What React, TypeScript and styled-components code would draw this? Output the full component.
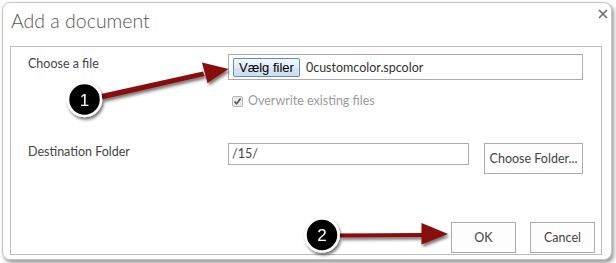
import React from "react";
import styled, { createGlobalStyle } from "styled-components";

const Global = createGlobalStyle`
  html, body { margin: 0; padding: 0; background: #ffffff; }
  body { font-family: Lato, "Open Sans", sans-serif; }
`;

const Stage = styled.div`
  position: relative;
  width: 616px;
  height: 263px;
  padding: 2px 0 0 2px;
  box-sizing: border-box;
`;

const Dialog = styled.div`
  width: 610px;
  height: 258px;
  box-sizing: border-box;
  border: 1px solid #c4c4c4;
  border-radius: 8px;
  background: #ffffff;
  box-shadow: 2px 3px 4px rgba(0, 0, 0, 0.4);
  display: flex;
  flex-direction: column;
`;

const Header = styled.div`
  height: 43px;
  box-sizing: border-box;
  padding: 4px 3px 0 8px;
  display: flex;
  align-items: flex-start;
  justify-content: space-between;
`;

const Title = styled.h1`
  margin: 0;
  font-family: Lato, "Open Sans", sans-serif;
  font-weight: 300;
  font-size: 19.5px;
  line-height: 28px;
  color: #555555;
`;

const Close = styled.svg`
  margin-top: 2px;
  width: 10px;
  height: 10px;
`;

const Panel = styled.div`
  margin: 0 9px 0 7px;
  height: 209px;
  box-sizing: border-box;
  border: 1px solid #bdbdbd;
  padding: 7px 6px 0 17px;
  display: flex;
  flex-direction: column;
`;

const Row = styled.div<{ $top?: number }>`
  display: grid;
  grid-template-columns: 200px 1fr;
  margin-top: ${(p) => p.$top ?? 0}px;
  align-items: start;
`;

const Label = styled.div<{ $pad?: number }>`
  font-size: 12.5px;
  color: #444444;
  padding-top: ${(p) => p.$pad ?? 0}px;
  line-height: 16px;
`;

const FieldColumn = styled.div`
  display: flex;
  flex-direction: column;
  gap: 14px;
`;

const Field = styled.div`
  display: flex;
  align-items: flex-start;
  gap: 15px;
`;

const FileBox = styled.div`
  width: 355px;
  height: 26px;
  box-sizing: border-box;
  border: 1px solid #ababab;
  display: flex;
  align-items: center;
  padding-left: 4px;
  gap: 6px;
`;

const NativeButton = styled.div`
  height: 19px;
  box-sizing: border-box;
  padding: 0 5px;
  border: 1px solid #5a8fc4;
  border-radius: 2px;
  background: linear-gradient(#f2f7fb, #e3edf6 50%, #d4e3f1 51%, #cfdfee);
  font-family: "Liberation Sans", Arial, sans-serif;
  font-size: 13px;
  line-height: 17px;
  color: #000000;
`;

const FileName = styled.span`
  font-size: 12.5px;
  color: #333333;
`;

const CheckRow = styled.label`
  display: flex;
  align-items: center;
  gap: 5px;
  font-size: 12.5px;
  line-height: 14px;
  color: #9a9a9a;
  margin-left: 4px;
`;

const Check = styled.span`
  width: 11px;
  height: 11px;
  box-sizing: border-box;
  border: 1px solid #b5b5b5;
  border-radius: 2px;
  background: #eaeaea;
  display: flex;
  align-items: center;
  justify-content: center;
`;

const TextBox = styled.div`
  width: 241px;
  height: 22px;
  box-sizing: border-box;
  border: 1px solid #ababab;
  font-size: 12.5px;
  line-height: 20px;
  color: #444444;
  padding-left: 3px;
`;

const Button = styled.div<{ $w: number }>`
  width: ${(p) => p.$w}px;
  height: 31px;
  box-sizing: border-box;
  border: 1px solid #ababab;
  background: #fdfdfd;
  font-size: 12.5px;
  color: #444444;
  display: flex;
  align-items: center;
  justify-content: center;
`;

const Footer = styled.div`
  margin-top: auto;
  margin-bottom: 1px;
  display: flex;
  justify-content: flex-end;
  gap: 14px;
`;

const Overlay = styled.svg`
  position: absolute;
  left: 0;
  top: 0;
  pointer-events: none;
`;

const MarkerText = styled.text`
  font-family: "Liberation Sans", Arial, sans-serif;
  font-size: 17px;
  fill: #ffffff;
`;

function Marker({ cx, cy, n }: { cx: number; cy: number; n: string }) {
  return (
    <g filter="url(#shadow)">
      <circle cx={cx} cy={cy} r={16.5} fill="#050505" stroke="#ffffff" strokeWidth={2.5} />
      <MarkerText x={cx} y={cy + 6} textAnchor="middle">
        {n}
      </MarkerText>
    </g>
  );
}

export default function App() {
  return (
    <>
      <Global />
      <Stage>
        <Dialog>
          <Header>
            <Title>Add a document</Title>
            <Close viewBox="0 0 10 10">
              <path d="M1 1 L9 9 M9 1 L1 9" stroke="#6a6a6a" strokeWidth="1.6" />
            </Close>
          </Header>
          <Panel>
            <Row $top={0}>
              <Label $pad={2}>Choose a file</Label>
              <FieldColumn>
                <FileBox>
                  <NativeButton>Vælg filer</NativeButton>
                  <FileName>0customcolor.spcolor</FileName>
                </FileBox>
                <CheckRow>
                  <Check>
                    <svg width="9" height="9" viewBox="0 0 9 9">
                      <path d="M1.5 4.5 L3.6 6.8 L7.6 1.6" stroke="#555" strokeWidth="1.7" fill="none" />
                    </svg>
                  </Check>
                  Overwrite existing files
                </CheckRow>
              </FieldColumn>
            </Row>
            <Row $top={35}>
              <Label $pad={1}>Destination Folder</Label>
              <Field>
                <TextBox>/15/</TextBox>
                <Button $w={99}>Choose Folder...</Button>
              </Field>
            </Row>
            <Footer>
              <Button $w={65}>OK</Button>
              <Button $w={65}>Cancel</Button>
            </Footer>
          </Panel>
        </Dialog>
        <Overlay width="616" height="263" viewBox="0 0 616 263">
          <defs>
            <filter id="shadow" x="-30%" y="-30%" width="170%" height="170%">
              <feDropShadow dx="1.5" dy="2.5" stdDeviation="1.6" floodColor="#000" floodOpacity="0.55" />
            </filter>
          </defs>
          <g filter="url(#shadow)" fill="#8a0b0b" stroke="none">
            <polygon points="101,94 203,71.5 204.5,76 102,99.5" />
            <polygon points="228.5,69 202,62.5 207.5,83" />
            <polygon points="340,233.5 423,233 423,237 340,237.5" />
            <polygon points="448,234 421.5,223 421.5,244.5" />
          </g>
          <Marker cx={84.5} cy={99.5} n="1" />
          <Marker cx={322} cy={235} n="2" />
        </Overlay>
      </Stage>
    </>
  );
}
